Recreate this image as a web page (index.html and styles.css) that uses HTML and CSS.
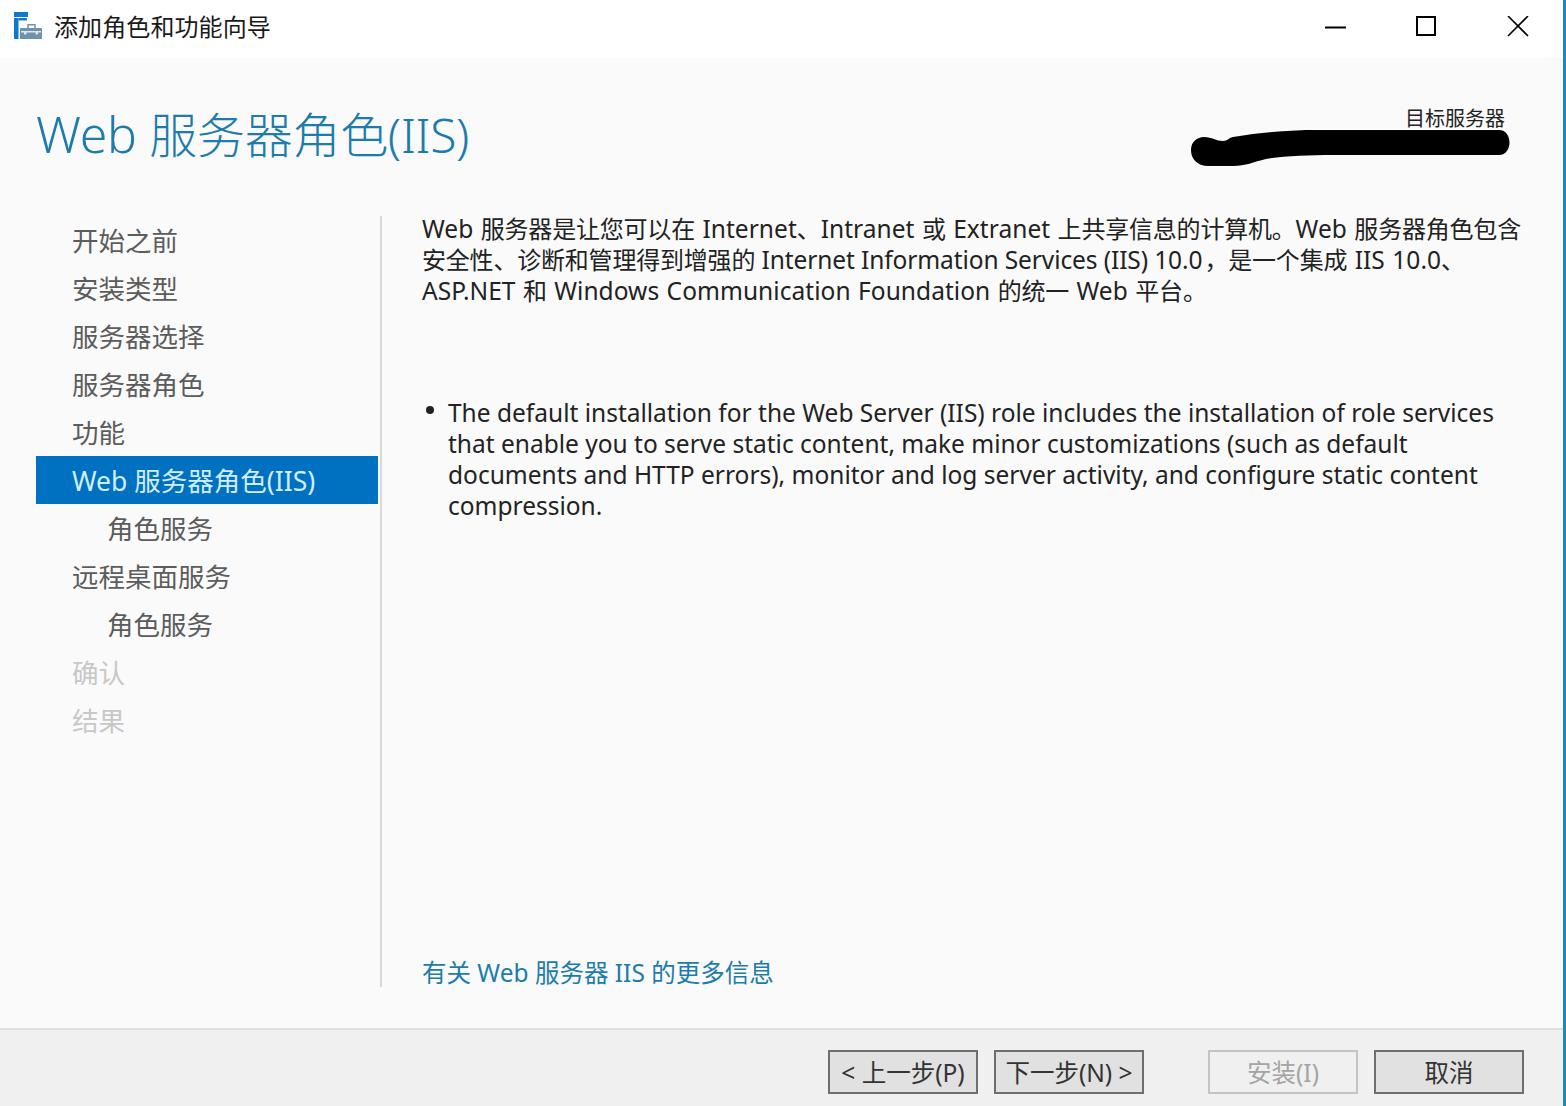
FILE: index.html
```html
<!DOCTYPE html>
<html lang="zh-CN">
<head>
<meta charset="utf-8">
<title>添加角色和功能向导</title>
<link rel="stylesheet" href="styles.css">
</head>
<body>
<div class="window">
  <header class="titlebar">
    <svg class="app-icon" width="28" height="28" viewBox="0 0 28 28">
      <rect x="0" y="0" width="14" height="5" fill="#0f78c8"/>
      <rect x="0" y="6" width="4.5" height="21" fill="#0f78c8"/>
      <rect x="4.5" y="6" width="8.5" height="2.5" fill="#0f78c8"/>
      <path d="M7 16h20a1 1 0 0 1 1 1v10H6V17a1 1 0 0 1 1-1z" fill="#6f93ad"/>
      <path d="M14 16v-3.2h7V16" fill="none" stroke="#6f93ad" stroke-width="1.5"/>
      <rect x="7" y="19" width="20" height="1.5" fill="#dfe8ee"/>
      <rect x="10" y="19" width="2.5" height="3.5" fill="#dfe8ee"/>
      <rect x="21.5" y="19" width="2.5" height="3.5" fill="#dfe8ee"/>
    </svg>
    <span class="title-text">添加角色和功能向导</span>
    <div class="controls">
      <svg width="22" height="22" viewBox="0 0 22 22"><path d="M0 11.5h21" stroke="#000" stroke-width="2"/></svg>
      <svg width="22" height="22" viewBox="0 0 22 22"><rect x="1" y="1" width="18" height="18" fill="none" stroke="#000" stroke-width="2"/></svg>
      <svg width="22" height="22" viewBox="0 0 22 22"><path d="M1 0l20 20M21 0L1 20" stroke="#000" stroke-width="1.6"/></svg>
    </div>
  </header>

  <main class="body">
    <div class="head">
      <h1 class="page-title"><span class="title-lat">Web </span>服务器角色(IIS)</h1>
      <div class="target">目标服务器</div>
      <svg class="scribble" width="322" height="37" viewBox="0 0 322 37">
        <path d="M16 7 C24 7 28 11 35 11 C40 11 40 8 45 7 C70 3 90 1 118 0 L311 0 C325 0 325 25 311 25 L145 25 C120 25 95 26 78 29 C65 32 58 36 45 36 L21 36 C8 36 3 28 3 20 C3 12 9 7 16 7Z" fill="#000"/>
      </svg>
    </div>
    <div class="columns">
      <nav class="steps">
        <div class="step">开始之前</div>
        <div class="step">安装类型</div>
        <div class="step">服务器选择</div>
        <div class="step">服务器角色</div>
        <div class="step">功能</div>
        <div class="step active">Web 服务器角色(IIS)</div>
        <div class="step sub">角色服务</div>
        <div class="step">远程桌面服务</div>
        <div class="step sub">角色服务</div>
        <div class="step off">确认</div>
        <div class="step off">结果</div>
      </nav>
      <section class="content">
        <p class="intro"><span class="lat">Web </span>服务器是让您可以在<span class="lat"> Internet</span>、<span class="lat">Intranet </span>或<span class="lat"> Extranet </span>上共享信息的计算机。<span class="lat">Web </span>服务器角色包含<br>安全性、诊断和管理得到增强的<span class="lat tight"> Internet Information Services (IIS) 10.0</span><span class="comma">，</span>是一个集成<span class="lat"> IIS 10.0</span>、<br><span class="lat">ASP.NET </span>和<span class="lat"> Windows Communication Foundation </span>的统一<span class="lat"> Web </span>平台。</p>
        <ul class="notes">
          <li>The default installation for the Web Server (IIS) role includes the installation of role services<br>that enable you to serve static content, make minor customizations (such as default<br>documents and HTTP errors), monitor and log server activity, and configure static content<br>compression.</li>
        </ul>
        <a class="more" href="#">有关 Web 服务器 IIS 的更多信息</a>
      </section>
    </div>
  </main>

  <footer class="footer">
    <button class="btn">&lt; 上一步(P)</button>
    <button class="btn">下一步(N) &gt;</button>
    <button class="btn disabled gap">安装(I)</button>
    <button class="btn">取消</button>
  </footer>
</div>
</body>
</html>
```

FILE: styles.css
```css
* { box-sizing: border-box; }
html, body { margin: 0; padding: 0; height: 100%; }
body {
  font-family: "Noto Sans", "Noto Sans CJK SC", sans-serif;
  background: #fff;
  overflow: hidden;
}
.window {
  width: 1566px;
  height: 1106px;
  display: flex;
  flex-direction: column;
  border-right: 3px solid #1c86c8;
}
.titlebar {
  height: 58px;
  background: #fff;
  display: flex;
  align-items: center;
  padding: 0 0 4px 14px;
  flex: none;
}
.app-icon { flex: none; margin-top: -2px; }
.title-text {
  margin-left: 12px;
  font-size: 24px;
  line-height: 30px;
  letter-spacing: 0.1px;
  color: #1a1a1a;
}
.controls {
  margin-left: auto;
  margin-right: 34px;
  display: flex;
  gap: 69px;
  align-items: center;
}
.body {
  flex: 1;
  background: #fafafa;
  display: flex;
  flex-direction: column;
  min-height: 0;
}
.head {
  position: relative;
  height: 158px;
  padding: 43px 0 0 36px;
}
.page-title {
  margin: 0;
  font-size: 48px;
  line-height: 66px;
  font-weight: 300;
  letter-spacing: -0.3px;
  color: #1d7cab;
}
.title-lat { font-size: 50px; }
.target {
  position: absolute;
  top: 47px;
  right: 58px;
  font-size: 20px;
  line-height: 28px;
  color: #222;
}
.scribble { position: absolute; top: 72px; left: 1188px; }
.columns {
  flex: 1;
  display: flex;
  min-height: 0;
  padding-bottom: 41px;
}
.steps {
  width: 346px;
  margin-left: 36px;
  border-right: 2px solid #d8d8d8;
  flex: none;
}
.step {
  height: 48px;
  width: 342px;
  padding: 1px 0 0 36px;
  font-size: 26.5px;
  line-height: 48px;
  color: #5c5c5c;
}
.step.sub { padding-left: 71px; }
.step.active { background: #0070c0; color: #cfeeff; }
.step.off { color: #c8c8c8; }
.content {
  flex: 1;
  padding: 0 0 0 40px;
  display: flex;
  flex-direction: column;
  color: #222;
}
.intro {
  margin: -3px 0 0;
  font-size: 24px;
  line-height: 31px;
  letter-spacing: -0.2px;
  white-space: nowrap;
}
.lat { font-size: 24.5px; letter-spacing: 0.05px; word-spacing: 1px; }
.lat.tight { letter-spacing: -0.1px; word-spacing: 0; }
.comma { margin-left: 2px; }
.notes {
  margin: 91px 0 0;
  padding: 0 0 0 26px;
  font-size: 24.5px;
  line-height: 31px;
  white-space: nowrap;
  list-style: none;
}
.notes li { position: relative; }
.notes li::before {
  content: "";
  position: absolute;
  left: -22px;
  top: 9px;
  width: 8px;
  height: 8px;
  border-radius: 50%;
  background: #222;
}
.more {
  margin: auto 0 -2px;
  font-size: 24.5px;
  line-height: 32px;
  color: #1d7cab;
  text-decoration: none;
}
.footer {
  height: 78px;
  flex: none;
  background: #f0f0f0;
  border-top: 2px solid #dfdfdf;
  display: flex;
  align-items: flex-start;
  padding: 20px 39px 0 0;
  justify-content: flex-end;
  gap: 16px;
}
.btn {
  width: 150px;
  height: 44px;
  padding: 2px 0 0;
  background: #e1e1e1;
  border: 2px solid #6e6e6e;
  font-family: inherit;
  font-size: 24.5px;
  line-height: 38px;
  color: #333;
}
.btn.disabled {
  background: #f0f0f0;
  border-color: #c4c4c4;
  color: #a4a4a4;
}
.btn.gap { margin-left: 48px; }
```
